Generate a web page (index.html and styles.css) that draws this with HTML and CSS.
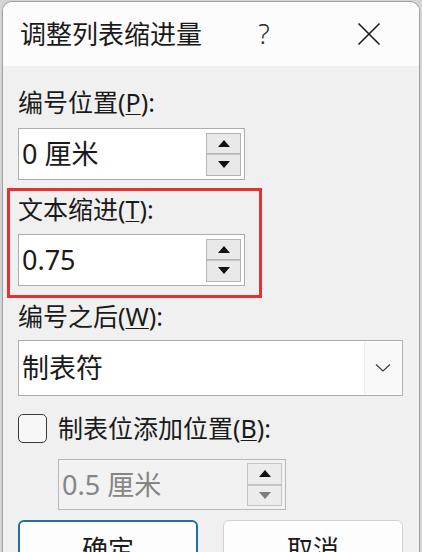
FILE: index.html
```html
<!DOCTYPE html>
<html lang="zh-CN">
<head>
<meta charset="utf-8">
<title>调整列表缩进量</title>
<link rel="stylesheet" href="styles.css">
</head>
<body>
<div class="dialog">
  <div class="titlebar">
    <div class="title">调整列表缩进量</div>
    <div class="help">?</div>
    <div class="close">
      <svg width="24" height="24" viewBox="0 0 24 24"><path d="M1.5 1.5 L22.5 22.5 M22.5 1.5 L1.5 22.5" stroke="#1c1c1c" stroke-width="1.6" fill="none"/></svg>
    </div>
  </div>
  <div class="content">
    <div class="label">编号位置(<u>P</u>):</div>
    <div class="spin first">
      <div class="value">0 厘米</div>
      <div class="arrows">
        <div class="arrow"><span class="tri-up"></span></div>
        <div class="arrow"><span class="tri-down"></span></div>
      </div>
    </div>

    <div class="group">
      <div class="label">文本缩进(<u>T</u>):</div>
      <div class="spin">
        <div class="value">0.75</div>
        <div class="arrows">
          <div class="arrow"><span class="tri-up"></span></div>
          <div class="arrow"><span class="tri-down"></span></div>
        </div>
      </div>
      <div class="highlight"></div>
    </div>

    <div class="label after">编号之后(<u>W</u>):</div>
    <div class="select">
      <div class="value">制表符</div>
      <div class="drop">
        <svg width="16" height="10" viewBox="0 0 16 10"><path d="M1 1.5 L8 8 L15 1.5" stroke="#3a3a3a" stroke-width="1.2" fill="none"/></svg>
      </div>
    </div>

    <div class="check-row">
      <span class="checkbox"></span>
      <span class="label">制表位添加位置(<u>B</u>):</span>
    </div>
    <div class="spin disabled">
      <div class="value">0.5 厘米</div>
      <div class="arrows">
        <div class="arrow"><span class="tri-up"></span></div>
        <div class="arrow"><span class="tri-down dim"></span></div>
      </div>
    </div>

    <div class="buttons">
      <div class="btn primary">确定</div>
      <div class="btn">取消</div>
    </div>
  </div>
</div>
</body>
</html>
```

FILE: styles.css
```css
* { box-sizing: border-box; }
html, body { margin: 0; height: 100%; }
body {
  background: #d4d4d4;
  font-family: "Noto Sans", "Noto Sans CJK SC", sans-serif;
  color: #1a1a1a;
  overflow: hidden;
}
.dialog {
  margin: 1px 0 0 2px;
  width: 418px;
  height: 570px;
  background: #f0f0f0;
  border: 1px solid #a0a0a0;
  border-bottom: none;
  border-radius: 10px 10px 0 0;
  overflow: hidden;
}
.titlebar {
  height: 64px;
  background: #fcfcfc;
  display: flex;
  align-items: center;
  padding-left: 17px;
}
.title { flex: 1; font-size: 26px; line-height: 30px; }
.help {
  width: 50px;
  text-align: center;
  font-size: 27px;
  line-height: 30px;
  margin-right: 57px;
  margin-left: -6px;
  color: #2a2a2a;
  font-weight: 300;
}
.close {
  width: 46px;
  height: 46px;
  margin-right: 27px;
  display: flex;
  align-items: center;
  justify-content: center;
}
.content { padding: 21px 0 0 15px; }
.label { font-size: 25px; line-height: 30px; height: 30px; white-space: nowrap; }
u { text-underline-offset: 2px; text-decoration-thickness: 1px; }

.spin {
  width: 227px;
  height: 52px;
  margin-top: 11px;
  background: #fff;
  border: 1px solid #adadad;
  display: flex;
  align-items: center;
  padding: 0 3px;
}
.value { flex: 1; font-size: 27px; line-height: 32px; white-space: nowrap; }
.arrows { width: 35px; height: 43px; display: flex; flex-direction: column; }
.arrow {
  flex: 1;
  border: 1px solid #b4b4b4;
  background: #e9e9e9;
  display: flex;
  align-items: center;
  justify-content: center;
}
.arrow + .arrow { border-top-color: #c8c8c8; }
.tri-up {
  width: 0; height: 0;
  border-left: 6px solid transparent;
  border-right: 6px solid transparent;
  border-bottom: 7px solid #111;
}
.tri-down {
  width: 0; height: 0;
  border-left: 6px solid transparent;
  border-right: 6px solid transparent;
  border-top: 7px solid #111;
}
.tri-down.dim { border-top-color: #7d7d7d; }

.group { position: relative; margin-top: 14px; }
.group .spin { margin-top: 10px; }
.highlight {
  position: absolute;
  left: -11px;
  top: -6px;
  width: 255px;
  height: 110px;
  border: 3px solid #e8302c;
  pointer-events: none;
}

.after { margin-top: 15px; }
.select {
  width: 385px;
  height: 56px;
  margin-top: 9px;
  background: #fff;
  border: 1px solid #adadad;
  display: flex;
  align-items: center;
  padding-left: 3px;
}
.drop {
  width: 37px;
  height: 52px;
  margin-right: 1px;
  background: #f9f9f9;
  border-left: 1px solid #ececec;
  display: flex;
  align-items: center;
  justify-content: center;
}

.check-row {
  margin-top: 17px;
  height: 30px;
  display: flex;
  align-items: center;
  gap: 11px;
}
.checkbox {
  width: 29px;
  height: 29px;
  border: 1.5px solid #3a3a3a;
  border-radius: 5px;
  background: #f7f7f7;
}
.spin.disabled {
  margin: 16px 0 0 40px;
  width: 228px;
  height: 51px;
  background: #f2f2f2;
  border-color: #b8b8b8;
}
.disabled .value { color: #858585; }
.disabled .arrow { background: #ececec; border-color: #c4c4c4; }

.buttons { display: flex; gap: 25px; margin-top: 10px; }
.btn {
  width: 180px;
  height: 50px;
  background: #fdfdfd;
  border: 1px solid #d2d2d2;
  border-radius: 6px;
  text-align: center;
  font-size: 26px;
  line-height: 30px;
  padding-top: 13px;
}
.btn.primary { border: 2px solid #246f9c; padding-top: 12px; }
```
